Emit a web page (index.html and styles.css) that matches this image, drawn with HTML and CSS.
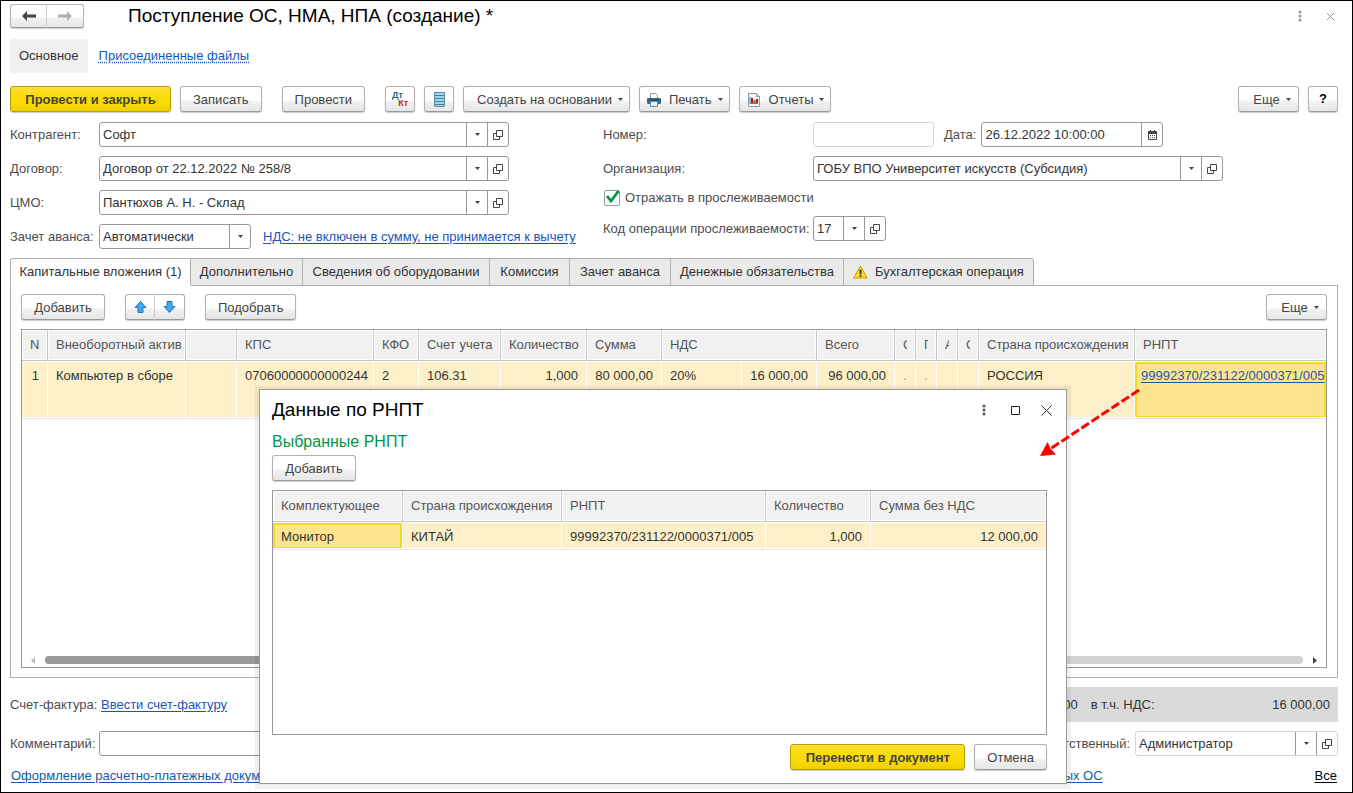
FILE: index.html
```html
<!DOCTYPE html>
<html lang="ru">
<head>
<meta charset="utf-8">
<title>Поступление ОС, НМА, НПА (создание) *</title>
<link rel="stylesheet" href="styles.css">
</head>
<body>
<svg class="defs" aria-hidden="true">
  <symbol id="open" viewBox="0 0 10 10"><path d="M3.500 .5h6v6h-6zM3.500 3.500h-3v6h6v-3" fill="none" stroke="#444"/></symbol>
  <symbol id="down" viewBox="0 0 5 3"><path d="M0 0h5L2.500 3z" fill="#444"/></symbol>
  <symbol id="dots" viewBox="0 0 4 12"><circle cx="2" cy="2" r="1.500"/><circle cx="2" cy="6" r="1.500"/><circle cx="2" cy="10" r="1.500"/></symbol>
</svg>
<main class="window">
  <header class="titlebar">
    <div class="pair">
      <button class="btn" aria-label="Назад"><svg width="14" height="10" viewBox="0 0 14 10"><path d="M0 5l5-5v3.500h9v3H5V10z" fill="#444"/></svg></button>
      <button class="btn" aria-label="Вперед"><svg width="14" height="10" viewBox="0 0 14 10"><path d="M14 5L9 0v3.500H0v3h9V10z" fill="#b0b0b0"/></svg></button>
    </div>
    <h1>Поступление ОС, НМА, НПА (создание) *</h1>
    <div class="winctl">
      <button class="plain" aria-label="Меню"><svg width="4" height="12" fill="#999"><use href="#dots"/></svg></button>
      <button class="plain" aria-label="Закрыть"><svg width="7" height="7" viewBox="0 0 7 7"><path d="M0 0l7 7M7 0L0 7" stroke="#999"/></svg></button>
    </div>
  </header>

  <nav class="sections">
    <a class="section" href="#">Основное</a>
    <a class="dotted" href="#">Присоединенные файлы</a>
  </nav>

  <div class="commands">
    <button class="btn primary post">Провести и закрыть</button>
    <button class="btn">Записать</button>
    <button class="btn spaced">Провести</button>
    <button class="btn icon spaced" aria-label="Дт Кт"><span class="dtkt"><b>Дт</b><b>Кт</b></span></button>
    <button class="btn icon" aria-label="Журнал"><svg width="11" height="15" viewBox="0 0 11 15"><path d="M.5.5h10v14H.5z" fill="#9fd6ea" stroke="#5b8fa8"/><path d="M1 3.500h9M1 6.500h9M1 9.500h9M1 12.500h9" stroke="#477f98"/></svg></button>
    <button class="btn menu">Создать на основании<svg width="5" height="3"><use href="#down"/></svg></button>
    <button class="btn menu pic"><svg class="lead" width="14" height="14" viewBox="0 0 14 14"><path d="M3.500 6V.5h5l2 2V6" fill="#fff" stroke="#8a9aa8"/><rect y="5" width="14" height="6" rx="1" fill="#3d6a90"/><path d="M2 7h10" stroke="#18384f"/><path d="M3.500 8.500h7v5h-7z" fill="#e8f3fa" stroke="#6d8aa0"/></svg>Печать<svg width="5" height="3"><use href="#down"/></svg></button>
    <button class="btn menu pic reports"><svg class="lead" width="12" height="14" viewBox="0 0 12 14"><path d="M.5.5h8l3 3v10H.5z" fill="#f4f7f8" stroke="#8b9aa5"/><path d="M8.500.5v3h3" fill="none" stroke="#8b9aa5"/><path d="M2 4v6.500h8" fill="none" stroke="#69747c"/><path d="M3 5h2v5H3zM8 6h2v4H8z" fill="#e3001b"/><path d="M5.500 7h2v3h-2z" fill="#18963c"/></svg>Отчеты<svg width="5" height="3"><use href="#down"/></svg></button>
    <button class="btn menu last">Еще<svg width="5" height="3"><use href="#down"/></svg></button>
    <button class="btn icon help">?</button>
  </div>

  <form class="form">
    <div class="col left">
      <div class="row"><label for="f1">Контрагент:</label><div class="field wide"><input id="f1" value="Софт"><button type="button" aria-label="Выбрать"><svg width="5" height="3"><use href="#down"/></svg></button><button type="button" aria-label="Открыть"><svg width="10" height="10"><use href="#open"/></svg></button></div></div>
      <div class="row"><label for="f2">Договор:</label><div class="field wide"><input id="f2" value="Договор от 22.12.2022 № 258/8"><button type="button" aria-label="Выбрать"><svg width="5" height="3"><use href="#down"/></svg></button><button type="button" aria-label="Открыть"><svg width="10" height="10"><use href="#open"/></svg></button></div></div>
      <div class="row"><label for="f3">ЦМО:</label><div class="field wide"><input id="f3" value="Пантюхов А. Н. - Склад"><button type="button" aria-label="Выбрать"><svg width="5" height="3"><use href="#down"/></svg></button><button type="button" aria-label="Открыть"><svg width="10" height="10"><use href="#open"/></svg></button></div></div>
      <div class="row"><label for="f4">Зачет аванса:</label><div class="field advance"><select id="f4"><option>Автоматически</option></select><span class="cue"><svg width="5" height="3"><use href="#down"/></svg></span></div><a class="vat" href="#">НДС: не включен в сумму, не принимается к вычету</a></div>
    </div>
    <div class="col right">
      <div class="row"><label for="f5">Номер:</label><div class="field pale number"><input id="f5"></div><label class="date-label" for="f6">Дата:</label><div class="field date"><input id="f6" value="26.12.2022 10:00:00"><button type="button" aria-label="Календарь"><svg width="9" height="10" viewBox="0 0 9 10"><path d="M.5 2.500h8v7h-8z" fill="#fff" stroke="#444"/><path d="M0 1h9v3H0zM2 0h1v1H2zM6 0h1v1H6z" fill="#444"/><path d="M2 5.500h5M2 7.500h5" stroke="#444" stroke-dasharray="1 1"/></svg></button></div></div>
      <div class="row"><label for="f7">Организация:</label><div class="field wide"><input id="f7" value="ГОБУ ВПО Университет искусств (Субсидия)"><button type="button" aria-label="Выбрать"><svg width="5" height="3"><use href="#down"/></svg></button><button type="button" aria-label="Открыть"><svg width="10" height="10"><use href="#open"/></svg></button></div></div>
      <div class="check"><span class="tick"><input type="checkbox" id="f8" checked><svg width="15" height="13" viewBox="0 0 15 13"><path d="M2 6l4 5L13.500 1" fill="none" stroke="#009646" stroke-width="2.800"/></svg></span><label for="f8">Отражать в прослеживаемости</label></div>
      <div class="row"><label for="f9">Код операции прослеживаемости:</label><div class="field code"><input id="f9" value="17"><button type="button" aria-label="Выбрать"><svg width="5" height="3"><use href="#down"/></svg></button><button type="button" aria-label="Открыть"><svg width="10" height="10"><use href="#open"/></svg></button></div></div>
    </div>
  </form>

  <div class="tabs" role="tablist">
    <button class="tab t181 active" role="tab" aria-selected="true">Капитальные вложения (1)</button>
    <button class="tab t112" role="tab">Дополнительно</button>
    <button class="tab t187" role="tab">Сведения об оборудовании</button>
    <button class="tab t80" role="tab">Комиссия</button>
    <button class="tab t101" role="tab">Зачет аванса</button>
    <button class="tab t173" role="tab">Денежные обязательства</button>
    <button class="tab t190" role="tab"><svg width="15" height="14" viewBox="0 0 15 14"><path d="M7.500 1L14.300 13H.7z" fill="#ffdc28" stroke="#c49a12" stroke-linejoin="round"/><path d="M6.500 4.500h2v5h-2zM6.500 10.300h2v1.700h-2z" fill="#444"/></svg>Бухгалтерская операция</button>
  </div>

  <section class="panel">
    <div class="tools">
      <button class="btn add">Добавить</button>
      <div class="pair arrows">
        <button class="btn" aria-label="Вверх"><svg width="13" height="12" viewBox="0 0 13 12"><path d="M6.500.5l5.500 6H9v5H4v-5H1z" fill="#3fa9f0" stroke="#2675b5"/></svg></button>
        <button class="btn" aria-label="Вниз"><svg width="13" height="12" viewBox="0 0 13 12"><path d="M6.500 11.500l5.500-6H9v-5H4v5H1z" fill="#3fa9f0" stroke="#2675b5"/></svg></button>
      </div>
      <button class="btn">Подобрать</button>
      <button class="btn menu last">Еще<svg width="5" height="3"><use href="#down"/></svg></button>
    </div>
    <div class="grid">
      <table class="assets">
        <colgroup><col class="w26"><col class="w138"><col class="w51"><col class="w137"><col class="w45"><col class="w82"><col class="w86"><col class="w75"><col class="w80"><col class="w75"><col class="w78"><col class="w21"><col class="w21"><col class="w21"><col class="w21"><col class="w156"><col></colgroup>
        <thead><tr><th>N</th><th>Внеоборотный актив</th><th></th><th>КПС</th><th>КФО</th><th>Счет учета</th><th>Количество</th><th>Сумма</th><th colspan="2">НДС</th><th>Всего</th><th><span>С</span></th><th><span>Г</span></th><th><span>А</span></th><th><span>С</span></th><th>Страна происхождения</th><th>РНПТ</th></tr></thead>
        <tbody><tr><td class="num">1</td><td>Компьютер в сборе</td><td></td><td>07060000000000244</td><td>2</td><td>106.31</td><td class="num">1,000</td><td class="num">80 000,00</td><td>20%</td><td class="num">16 000,00</td><td class="num">96 000,00</td><td class="faint"><span>.</span></td><td class="faint"><span>.</span></td><td></td><td></td><td>РОССИЯ</td><td class="current"><a href="#">99992370/231122/0000371/005</a></td></tr></tbody>
      </table>
      <div class="scroll">
        <svg width="4" height="7" viewBox="0 0 4 7"><path d="M4 0v7L0 3.500z" fill="#bbb"/></svg>
        <div class="track"><div class="thumb"></div></div>
        <svg width="4" height="7" viewBox="0 0 4 7"><path d="M0 0v7l4-3.500z" fill="#444"/></svg>
      </div>
    </div>
  </section>

  <div class="totals">
    <span class="caption">Счет-фактура:</span><a href="#">Ввести счет-фактуру</a>
    <div class="sum"><span>Всего:</span><output>96 000,00</output><span class="tax">в т.ч. НДС:</span><output>16 000,00</output></div>
  </div>
  <div class="row comment">
    <label for="f10">Комментарий:</label><div class="field note"><input id="f10"></div>
    <label class="resp-label" for="f11">Ответственный:</label><div class="field pale resp"><input id="f11" value="Администратор"><button type="button" aria-label="Выбрать"><svg width="5" height="3"><use href="#down"/></svg></button><button type="button" aria-label="Открыть"><svg width="10" height="10"><use href="#open"/></svg></button></div>
  </div>
  <footer class="links"><a href="#">Оформление расчетно-платежных документов</a><a class="leased" href="#">Учет выданных ОС</a><a class="all" href="#">Все</a></footer>
</main>

<div class="dialog" role="dialog" aria-labelledby="dlg">
  <header class="dialog-head">
    <h2 id="dlg">Данные по РНПТ</h2>
    <div class="dialog-ctl">
      <button class="plain more" aria-label="Меню"><svg width="4" height="12" fill="#555"><use href="#dots"/></svg></button>
      <button class="plain" aria-label="Развернуть"><svg width="9" height="9" viewBox="0 0 9 9"><path d="M.5.5h8v8h-8z" fill="none" stroke="#222"/></svg></button>
      <button class="plain" aria-label="Закрыть"><svg width="11" height="11" viewBox="0 0 11 11"><path d="M.5.5l10 10M10.500.5l-10 10" stroke="#333"/></svg></button>
    </div>
  </header>
  <h3>Выбранные РНПТ</h3>
  <button class="btn add">Добавить</button>
  <div class="grid parts-box">
    <table>
      <colgroup><col class="w130"><col class="w159"><col class="w204"><col class="w105"><col></colgroup>
      <thead><tr><th>Комплектующее</th><th>Страна происхождения</th><th>РНПТ</th><th>Количество</th><th>Сумма без НДС</th></tr></thead>
      <tbody><tr><td class="current">Монитор</td><td>КИТАЙ</td><td>99992370/231122/0000371/005</td><td class="num">1,000</td><td class="num">12 000,00</td></tr></tbody>
    </table>
  </div>
  <div class="actions"><button class="btn primary transfer">Перенести в документ</button><button class="btn">Отмена</button></div>
</div>

<svg class="pointer" width="104" height="70" viewBox="0 0 104 70" aria-hidden="true"><path d="M101 2L12 61" stroke="#f00" stroke-width="3" stroke-dasharray="9 3"/><path d="M2 68L9.500 54l3 6.500 5.500 6z" fill="#f00"/></svg>
</body>
</html>
```
FILE: styles.css
```css
* { box-sizing: border-box; }

body {
  margin: 0;
  position: relative;
  font: 13px/16px "Liberation Sans", Arial, sans-serif;
  color: #333;
  background: #fff;
}

button, input, select { font: inherit; color: inherit; }
h1, h2, h3 { margin: 0; font-weight: normal; }
svg { display: block; flex: none; }
a { color: #1a55b5; text-underline-offset: 2px; }
.defs { position: absolute; width: 0; height: 0; }

.window {
  min-height: 100vh;
  display: flex;
  flex-direction: column;
  border: 1px solid #000;
  padding: 3px 14px 8px 9px;
}

/* Buttons */
.btn {
  height: 26px;
  padding: 1px 12px 0;
  display: inline-flex;
  align-items: center;
  justify-content: center;
  white-space: nowrap;
  color: #444;
  border: 1px solid #b2b2b2;
  border-bottom-color: #999;
  border-radius: 3px;
  background: linear-gradient(#fff 0 55%, #f2f2f2 58%, #e6e6e6);
  box-shadow: 0 1px 1px #ccc;
}
.primary {
  font-weight: bold;
  border-color: #b59f08;
  background: linear-gradient(#fddf38, #fadb00 45%, #fadb00 60%, #efd000);
}
.post { width: 161px; }
.transfer { width: 175px; }
.add { width: 84px; }
.icon { width: 30px; padding: 0; }
.menu { gap: 6px; padding-left: 13px; padding-right: 6px; }
.pic { padding-left: 7px; }
.reports { padding-left: 8px; }
.lead { margin-right: 2px; }
.reports .lead { margin-right: 3px; }
.last { margin-left: auto; width: 61px; }
.help { font-weight: bold; color: #000; }
.spaced { margin-left: 11px; }
.plain { border: 0; padding: 0; background: none; display: flex; }
.pair { display: flex; }
.pair .btn { width: 37px; height: 24px; padding: 0; }
.pair .btn:first-child { border-radius: 3px 0 0 3px; border-right-color: #ccc; }
.pair .btn:last-child { border-radius: 0 3px 3px 0; border-left: 0; }
.dtkt { display: grid; font-size: 9px; line-height: 8px; color: #c22a12; width: 16px; }
.dtkt b:first-child { color: #25648d; justify-self: start; }
.dtkt b:last-child { justify-self: end; }

.titlebar { display: flex; align-items: center; }
h1 { font-size: 19px; line-height: 24px; color: #000; margin-left: 44px; }
.winctl { display: flex; align-items: center; gap: 25px; margin-left: auto; padding-right: 4px; }

.sections { display: flex; align-items: center; gap: 11px; margin-top: 11px; }
.section { padding: 9px; background: #f0f0f0; border-radius: 2px; color: #333; text-decoration: none; }
.dotted { text-decoration: underline dotted; }
.commands { display: flex; gap: 9px; margin-top: 13px; }

/* Form */
.form { display: grid; grid-template-columns: 593fr 735fr; margin-top: 10px; }
.col { display: flex; flex-direction: column; gap: 9px; }
.row { display: flex; align-items: center; }
.row label, .check label, .caption { color: #4d4d4d; white-space: nowrap; }
.left .row label { width: 89px; flex: none; }
.right .row label { width: 210px; flex: none; }
.right .row .date-label { width: auto; margin: 0 5px 0 10px; }
.field {
  display: flex;
  height: 25px;
  border: 1px solid #999;
  border-radius: 3px;
  background: #fff;
  overflow: hidden;
}
.field input, .field select { flex: 1; width: 0; min-width: 0; border: 0; padding: 0 3px; background: none; appearance: none; outline: 0; }
.field button, .cue {
  width: 21px;
  flex: none;
  padding: 0;
  display: flex;
  align-items: center;
  justify-content: center;
  border: 0;
  border-left: 1px solid #999;
  background: none;
}
.pale { border-color: #d4d4d4; }
.wide { flex: 1; max-width: 410px; }
.advance { width: 152px; }
.vat { margin-left: 12px; white-space: nowrap; }
.number { width: 121px; }
.date { width: 182px; }
.code { width: 73px; }
.check { display: flex; align-items: center; gap: 5px; margin-bottom: 1px; padding-left: 1px; }
.tick { position: relative; width: 16px; height: 16px; }
.tick input { appearance: none; display: block; width: 16px; height: 16px; margin: 0; border: 1px solid #999; border-radius: 2px; }
.tick svg { position: absolute; left: 1px; top: 0; }

/* Tabs */
.tabs { display: flex; margin-top: 9px; position: relative; }
.tab {
  height: 28px;
  padding: 0;
  display: flex;
  align-items: center;
  justify-content: center;
  gap: 7px;
  white-space: nowrap;
  border: 1px solid #b0b0b0;
  border-left-width: 0;
  background: #eaeaea;
}
.tab.active { border-left-width: 1px; border-bottom-color: #fff; border-radius: 3px 0 0 0; background: #fff; }
.tab:last-child { border-radius: 0 3px 0 0; }
.t181 { width: 181px; } .t112 { width: 112px; } .t187 { width: 187px; } .t80 { width: 80px; }
.t101 { width: 101px; } .t173 { width: 173px; } .t190 { width: 190px; }
.panel {
  flex: 1;
  display: flex;
  flex-direction: column;
  margin-top: -1px;
  padding: 8px 10px 9px;
  border: 1px solid #b0b0b0;
}
.tools { display: flex; gap: 20px; margin-bottom: 9px; }
.tools .pair .btn { width: 30px; height: 26px; }

/* Tables */
.grid { flex: 1; display: flex; flex-direction: column; border: 1px solid #999; overflow: hidden; }
table { width: 100%; table-layout: fixed; border-collapse: separate; border-spacing: 0; }
th, td { padding: 0 8px; white-space: nowrap; overflow: hidden; }
th {
  height: 31px;
  font-weight: normal;
  text-align: left;
  color: #555;
  background: #f1f1f1;
  border-right: 1px solid #c6c6c6;
  border-bottom: 1px solid #c6c6c6;
  box-shadow: inset 0 0 0 1px #fff;
}
td {
  height: 28px;
  padding-top: 1px;
  background: #fdf0c8;
  border-right: 1px solid #fff;
  border-top: 1px solid #fff;
  border-bottom: 1px solid #e6e6e6;
  box-shadow: inset 0 -1px #fff;
}
th:last-child, td:last-child { border-right: 0; }
th span, td span { display: block; overflow: hidden; }
.assets td { height: 58px; padding-top: 6px; vertical-align: top; }
.num { text-align: right; }
.faint { color: #999; }
td.current { background: #fde58f; box-shadow: inset 0 -1px #fff, inset 0 0 0 2px #f9d626; }
.assets td.current { padding-left: 6px; padding-right: 0; }
.w26 { width: 26px; } .w138 { width: 138px; } .w51 { width: 51px; } .w137 { width: 137px; }
.w45 { width: 45px; } .w82 { width: 82px; } .w86 { width: 86px; } .w75 { width: 75px; }
.w80 { width: 80px; } .w78 { width: 78px; } .w21 { width: 21px; } .w156 { width: 156px; }
.w130 { width: 130px; } .w159 { width: 159px; } .w204 { width: 204px; } .w105 { width: 105px; }

.scroll { display: flex; align-items: center; gap: 10px; margin-top: auto; padding: 0 9px 3px; }
.track { flex: 1; height: 8px; border-radius: 4px; background: #d3d3d3; }
.thumb { width: 60%; height: 8px; border-radius: 4px; background: #999; }

/* Footer */
.totals { display: flex; align-items: center; height: 35px; margin-top: 9px; }
.caption { width: 91px; }
.sum {
  width: 528px;
  height: 35px;
  margin-left: auto;
  padding: 0 8px;
  display: flex;
  align-items: center;
  background: #dadada;
}
.sum output:first-of-type { width: 222px; text-align: right; }
.sum output:last-child { margin-left: auto; }
.sum .tax { margin-left: 13px; }
.comment { margin-top: 9px; }
.comment label { width: 89px; }
.comment .resp-label { width: auto; margin: 0 5px 0 10px; }
.note { flex: 1; }
.resp { width: 203px; }
.links { display: flex; margin-top: 12px; padding: 0 1px; }
.leased { margin-left: auto; }
.all { color: #000; margin-left: 212px; }

/* Dialog floating over the document form */
.dialog {
  position: absolute;
  left: 259px;
  top: 389px;
  width: 808px;
  height: 395px;
  display: flex;
  flex-direction: column;
  align-items: flex-start;
  padding: 8px 19px 13px 12px;
  border: 1px solid #999;
  background: #fff;
  box-shadow: 0 1px 0 4px rgba(0, 0, 0, 0.06);
}
.dialog-head { align-self: stretch; display: flex; align-items: center; justify-content: space-between; }
h2 { font-size: 19px; line-height: 24px; color: #000; }
.dialog-ctl { display: flex; align-items: center; gap: 21px; margin-right: -5px; }
.more { margin-right: 4px; }
h3 { font-size: 16px; line-height: 20px; color: #009646; margin: 10px 0 3px; }
.parts-box { align-self: stretch; margin-top: 9px; }
.actions { align-self: flex-end; display: flex; gap: 9px; margin-top: 9px; }

.pointer { position: absolute; left: 1038px; top: 388px; fill: none; }
```
